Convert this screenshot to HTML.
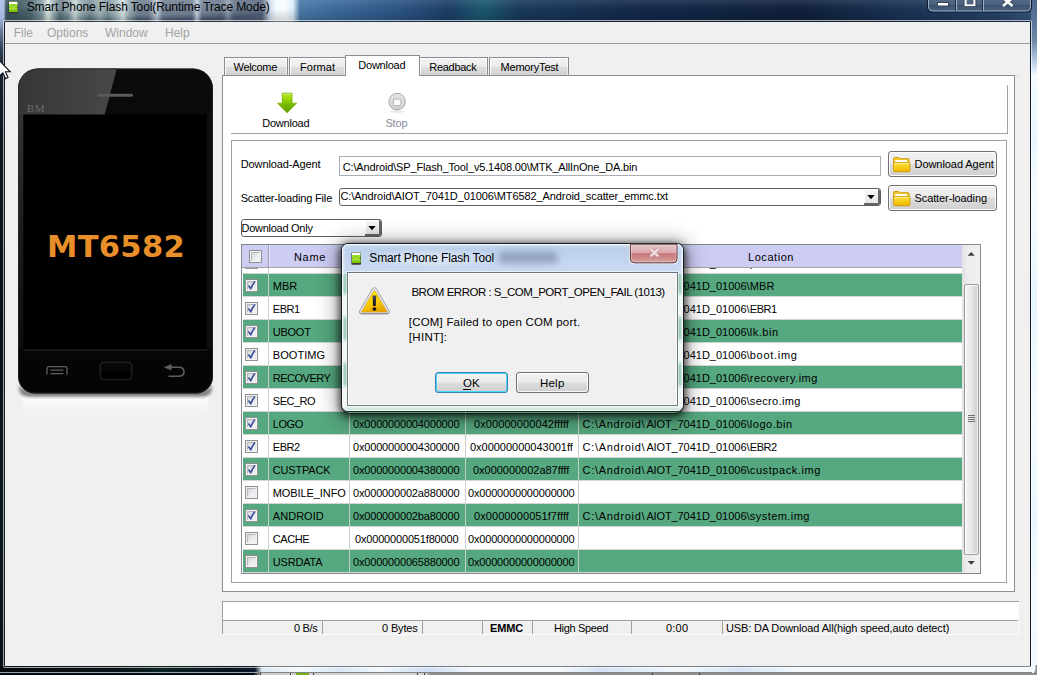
<!DOCTYPE html><html><head><meta charset="utf-8"><title>Smart Phone Flash Tool</title><style>
html,body{margin:0;padding:0}body{width:1037px;height:675px;overflow:hidden;position:relative;background:#0b1420;font-family:"Liberation Sans",sans-serif}div,span,svg{box-sizing:border-box}
</style></head><body>
<div style="position:absolute;left:0px;top:0px;width:1037px;height:22px;background:linear-gradient(to right,#b4c4ea 0px,#a3b3d4 4px,#3e5661 6px,#3d555f 12px,#4a646e 30px,#7f979e 42px,#dcebe4 48px,#9ab0b4 53px,#4f6872 60px,#6f8890 68px,#c4d6d6 75px,#8099a0 81px,#566f78 90px,#8aa0a6 100px,#5d7680 108px,#8fa6ac 116px,#d0dfe0 123px,#7a929c 129px,#3f5268 138px,#45566f 148px,#aebccc 157px,#4c5c76 163px,#46566f 170px,#475771 192px,#b9c8d8 197px,#4b5b75 202px,#48586f 222px,#7b8ba2 228px,#4a5a73 234px,#52627b 262px,#cfdceb 270px,#f4faff 276px,#f8fcff 285px,#dcecf8 293px,#4a78a8 300px,#3b6898 340px,#2c5484 400px,#1d3f66 450px,#1b5870 483px,#1a3a5c 520px,#14294a 640px,#10203c 800px,#1a3354 900px,#27456b 1000px,#3a5a80 1037px)"></div>
<div style="position:absolute;left:0px;top:0px;width:1037px;height:22px;background:linear-gradient(to bottom,rgba(255,255,255,.10),rgba(255,255,255,0) 40%,rgba(0,0,0,.18))"></div>
<div style="position:absolute;left:0px;top:0px;width:4px;height:675px;background:linear-gradient(to bottom,#b4c4ea 0,#a5b5dc 18px,#6f80a0 30px,#33435a 48px,#16222e 70px,#0d161f 140px,#0a1018 320px,#0c1a1e 520px,#091016 100%)"></div>
<div style="position:absolute;left:1031px;top:0px;width:6px;height:675px;background:linear-gradient(to bottom,#4e6788 0,#5a7396 20px,#6d86a6 40px,#b9cfe6 62px,#f2fbff 75px,#e6f6fe 140px,#f6fcff 200px,#e4f5fd 300px,#f5fcff 420px,#e6f6fe 520px,#f4fbff 600px,#eef8fd 100%)"></div>
<div style="position:absolute;left:0px;top:666px;width:1037px;height:9px;background:linear-gradient(to right,#070b10 0,#0a1418 120px,#0c2224 160px,#08121a 230px,#0b1a2c 255px,#dfeaf2 262px,#f3f9fd 300px,#d8e6f6 340px,#f2f8fd 380px,#cfdff5 430px,#f1f7fc 470px,#f3f9fd 560px,#d4e3f5 600px,#f2f8fc 680px,#d6e5f6 740px,#f3f9fd 800px,#f4fafd 1037px)"></div>
<div style="position:absolute;left:0px;top:672px;width:262px;height:1px;background:#9aa4ac"></div>
<div style="position:absolute;left:0px;top:673px;width:1034px;height:2px;background:linear-gradient(to right,#05080c 0,#05080c 254px,#cfcfcf 262px,#d2d2d2 426px,#8e8e8e 430px,#8e8e8e 1034px)"></div>
<div style="position:absolute;left:258px;top:672px;width:774px;height:1px;background:#7f8388"></div>
<div style="position:absolute;left:255px;top:673px;width:1px;height:2px;background:#3a3a3a"></div>
<div style="position:absolute;left:260px;top:673px;width:1px;height:2px;background:#3a3a3a"></div>
<div style="position:absolute;left:290px;top:673px;width:1px;height:2px;background:#3a3a3a"></div>
<div style="position:absolute;left:313px;top:673px;width:1px;height:2px;background:#3a3a3a"></div>
<div style="position:absolute;left:417px;top:673px;width:1px;height:2px;background:#3a3a3a"></div>
<div style="position:absolute;left:424px;top:673px;width:1px;height:2px;background:#3a3a3a"></div>
<div style="position:absolute;left:652px;top:673px;width:1px;height:2px;background:#3a3a3a"></div>
<div style="position:absolute;left:699px;top:673px;width:1px;height:2px;background:#3a3a3a"></div>
<div style="position:absolute;left:296px;top:673px;width:13px;height:2px;background:#76ad10"></div>
<div style="position:absolute;left:3px;top:20px;width:1029px;height:648px;border:1px solid rgba(255,255,255,.62);border-radius:2px"></div>
<div style="position:absolute;left:4px;top:21px;width:1027px;height:646px;border:1px solid rgba(22,32,42,.55);border-radius:1px"></div>
<div style="position:absolute;left:5px;top:22px;width:1025px;height:644px;background:#f0f0f0"></div>
<svg style="position:absolute;left:1027px;top:665px" width="10" height="10"><path d="M10 0 L10 10 L0 10 L0 8.5 L4 8.5 Q8.5 8.5 8.5 3 L8.5 0 Z" fill="#8e8e8e"/></svg>
<svg style="position:absolute;left:8px;top:0.5px" width="10.4" height="13.4" viewBox="0 0 10.4 13.4"><rect x="0.4" y="0.6" width="9.6" height="12.2" rx="0.8" fill="#3b3b3b"/><rect x="1" y="0.8" width="8.4" height="10" fill="#82d000"/><rect x="1" y="0.8" width="8.4" height="2.4" fill="#fbfff2"/><path d="M1 2.6 L5.2 6 L9.4 2.6 V4.6 L5.2 7.2 L1 4.6 Z" fill="#a7e24a"/><rect x="1" y="7.6" width="8.4" height="0.9" fill="#d9f5a8"/><rect x="1" y="8.5" width="8.4" height="2.3" fill="#7ccb00"/></svg>
<div style="position:absolute;left:14px;top:-8px;width:268px;height:28px;background:radial-gradient(ellipse at center,rgba(225,232,236,.34) 0,rgba(225,232,236,.28) 45%,rgba(225,232,236,0) 72%)"></div>
<span style="position:absolute;top:1.00px;font:400 12px/1 'Liberation Sans',sans-serif;color:#000;white-space:pre;letter-spacing:-0.100px;left:26.70px;">Smart Phone Flash Tool(Runtime Trace Mode)</span>
<svg style="position:absolute;left:927px;top:0px" width="106" height="13" viewBox="0 0 106 13"><defs><linearGradient id="cb" x1="0" y1="0" x2="0" y2="1"><stop offset="0" stop-color="#566b86"/><stop offset="0.45" stop-color="#4b617d"/><stop offset="0.5" stop-color="#3c5370"/><stop offset="1" stop-color="#4a627f"/></linearGradient></defs><path d="M0.5 -1 L0.5 7 Q0.5 12 5.5 12 L99.5 12 Q104.5 12 104.5 7 L104.5 -1 Z" fill="#1b2c44" stroke="#0f1b2d"/><path d="M1.5 -1 L1.5 7 Q1.5 11 5.5 11 L99.5 11 Q103.5 11 103.5 7 L103.5 -1 Z" fill="url(#cb)" stroke="#9db0c6" stroke-width="1"/><path d="M29.5 0 V11 M56.5 0 V11" stroke="#9db0c6"/><path d="M28.5 0 V11 M55.5 0 V11" stroke="#1c2e47"/><rect x="10.5" y="2.5" width="11" height="3.5" fill="#fff" stroke="#3a4658" stroke-width="1"/><rect x="38.5" y="-3" width="9" height="8.5" fill="none" stroke="#fff" stroke-width="2.2"/><rect x="37" y="-4" width="12" height="10.6" fill="none" stroke="#3a4658" stroke-width=".8"/><path d="M76 -2 L85.5 6 M85.5 -2 L76 6" stroke="#3a4658" stroke-width="4.2"/><path d="M76 -2 L85.5 6 M85.5 -2 L76 6" stroke="#fff" stroke-width="2.6"/></svg>
<div style="position:absolute;left:5px;top:43px;width:1025px;height:1px;background:#979797"></div>
<span style="position:absolute;top:27.00px;font:400 12px/1 'Liberation Sans',sans-serif;color:#a3a3a3;white-space:pre;letter-spacing:0.000px;left:13.70px;">File</span>
<span style="position:absolute;top:27.00px;font:400 12px/1 'Liberation Sans',sans-serif;color:#a3a3a3;white-space:pre;letter-spacing:0.000px;left:47.00px;">Options</span>
<span style="position:absolute;top:27.00px;font:400 12px/1 'Liberation Sans',sans-serif;color:#a3a3a3;white-space:pre;letter-spacing:0.000px;left:105.00px;">Window</span>
<span style="position:absolute;top:27.00px;font:400 12px/1 'Liberation Sans',sans-serif;color:#a3a3a3;white-space:pre;letter-spacing:0.000px;left:165.00px;">Help</span>
<svg style="position:absolute;left:10px;top:60px" width="212" height="380" viewBox="10 60 212 380"><defs><linearGradient id="refl" x1="0" y1="0" x2="0" y2="1"><stop offset="0" stop-color="#ffffff" stop-opacity=".85"/><stop offset="1" stop-color="#f0f0f0" stop-opacity="0"/></linearGradient><linearGradient id="gloss" x1="0" y1="0" x2="1" y2="0"><stop offset="0" stop-color="#363636"/><stop offset="1" stop-color="#484848"/></linearGradient><linearGradient id="lside" gradientUnits="userSpaceOnUse" x1="0" y1="115" x2="0" y2="350"><stop offset="0" stop-color="#333"/><stop offset=".5" stop-color="#1c1c1c"/><stop offset="1" stop-color="#0c0c0c"/></linearGradient><linearGradient id="body" x1="0" y1="0" x2="0" y2="1"><stop offset="0" stop-color="#0b0b0b"/><stop offset="1" stop-color="#050505"/></linearGradient><filter id="ps" x="-10%" y="-10%" width="120%" height="120%"><feGaussianBlur stdDeviation="1.6"/></filter><clipPath id="pc"><path d="M38 68.5 H193 A20 20 0 0 1 213 88.5 V376.5 A17 17 0 0 1 196 393.5 H35 A17 17 0 0 1 18 376.5 V88.5 A20 20 0 0 1 38 68.5 Z"/></clipPath></defs><path d="M22 396 H209 Q209 410 203 428 H28 Q22 410 22 396 Z" fill="url(#refl)"/><path d="M30 390 H201 Q210 390 212 384 V388 Q212 397 200 397 H31 Q19 397 19 388 V384 Q21 390 30 390Z" fill="#000" opacity=".45" filter="url(#ps)"/><path d="M38 68.5 H193 A20 20 0 0 1 213 88.5 V376.5 A17 17 0 0 1 196 393.5 H35 A17 17 0 0 1 18 376.5 V88.5 A20 20 0 0 1 38 68.5 Z" fill="url(#body)"/><g clip-path="url(#pc)"><path d="M18 68 H117 L104.5 115 H18 Z" fill="url(#gloss)"/><path d="M18 115 H23.5 V350 H18 Z" fill="url(#lside)"/><rect x="206.5" y="115" width="6.5" height="235" fill="#0d0d0d"/></g><path d="M38 69 H193 A19.5 19.5 0 0 1 212.5 88.5 V376.5 A16.5 16.5 0 0 1 196 393 H35 A16.5 16.5 0 0 1 18.5 376.5 V88.5 A19.5 19.5 0 0 1 38 69 Z" fill="none" stroke="#2a2a2a" stroke-width="1" opacity=".7"/><rect x="23.5" y="114.5" width="183" height="235.5" fill="#000"/><rect x="23.5" y="349.5" width="183" height="1" fill="#2e2e2e"/><rect x="97.5" y="93.7" width="35.5" height="3" rx="1.5" fill="#5a5a5a"/><rect x="100.2" y="362.2" width="31.6" height="17.6" rx="4" fill="#060606" stroke="#2c2c2c" stroke-width="1"/><rect x="101" y="372" width="30" height="7" rx="3" fill="#000"/><path d="M47 374.5 V368.5 Q47 366.7 48.8 366.7 H65.2 Q67 366.7 67 368.5 V374.5" fill="none" stroke="#5e5e5e" stroke-width="1.3"/><path d="M50.5 370.2 H63.5 M50.5 373.6 H63.5" stroke="#5e5e5e" stroke-width="1.3"/><path d="M170 367.3 H178.5 Q184 367.3 184 371.7 Q184 376.2 178.5 376.2 H168.5" fill="none" stroke="#5e5e5e" stroke-width="1.6"/><path d="M163.7 367.3 L171.5 364 V370.6 Z" fill="#5e5e5e"/></svg>
<span style="position:absolute;top:103.00px;font:400 11px/1 'Liberation Serif',serif;color:#6b6b6b;white-space:pre;letter-spacing:0.438px;left:27.00px;">BM</span>
<span style="position:absolute;top:232.00px;font:700 30.5px/1 'DejaVu Sans',sans-serif;color:#e98f29;white-space:pre;letter-spacing:0.326px;left:47.00px;">MT6582</span>
<div style="position:absolute;left:224px;top:57px;width:64px;height:19px;background:linear-gradient(to bottom,#f3f3f3 0,#ececec 48%,#dedede 52%,#d0d0d0 100%);border:1px solid #898c95;border-bottom:none;box-shadow:inset 1px 1px 0 rgba(255,255,255,.85),inset -1px 0 0 rgba(255,255,255,.5)"></div>
<div style="position:absolute;left:289px;top:57px;width:57px;height:19px;background:linear-gradient(to bottom,#f3f3f3 0,#ececec 48%,#dedede 52%,#d0d0d0 100%);border:1px solid #898c95;border-bottom:none;box-shadow:inset 1px 1px 0 rgba(255,255,255,.85),inset -1px 0 0 rgba(255,255,255,.5)"></div>
<div style="position:absolute;left:419px;top:57px;width:69px;height:19px;background:linear-gradient(to bottom,#f3f3f3 0,#ececec 48%,#dedede 52%,#d0d0d0 100%);border:1px solid #898c95;border-bottom:none;box-shadow:inset 1px 1px 0 rgba(255,255,255,.85),inset -1px 0 0 rgba(255,255,255,.5)"></div>
<div style="position:absolute;left:489px;top:57px;width:80px;height:19px;background:linear-gradient(to bottom,#f3f3f3 0,#ececec 48%,#dedede 52%,#d0d0d0 100%);border:1px solid #898c95;border-bottom:none;box-shadow:inset 1px 1px 0 rgba(255,255,255,.85),inset -1px 0 0 rgba(255,255,255,.5)"></div>
<div style="position:absolute;left:222px;top:75px;width:793px;height:517px;background:#fff;border:1px solid #898c95"></div>
<div style="position:absolute;left:1015px;top:75px;width:4px;height:1px;background:#d9d9d9"></div>
<div style="position:absolute;left:345px;top:55px;width:75px;height:21px;background:#fff;border:1px solid #898c95;border-bottom:none"></div>
<span style="position:absolute;top:62.00px;font:400 11px/1 'Liberation Sans',sans-serif;color:#000;white-space:pre;letter-spacing:-0.308px;left:233.50px;">Welcome</span>
<span style="position:absolute;top:62.00px;font:400 11px/1 'Liberation Sans',sans-serif;color:#000;white-space:pre;letter-spacing:0.026px;left:300.00px;">Format</span>
<span style="position:absolute;top:60.00px;font:400 11px/1 'Liberation Sans',sans-serif;color:#000;white-space:pre;letter-spacing:-0.240px;left:358.30px;">Download</span>
<span style="position:absolute;top:62.00px;font:400 11px/1 'Liberation Sans',sans-serif;color:#000;white-space:pre;letter-spacing:-0.293px;left:429.30px;">Readback</span>
<span style="position:absolute;top:62.00px;font:400 11px/1 'Liberation Sans',sans-serif;color:#000;white-space:pre;letter-spacing:-0.191px;left:500.50px;">MemoryTest</span>
<div style="position:absolute;left:231px;top:133px;width:777px;height:1px;background:#a0a0a0"></div>
<div style="position:absolute;left:1007px;top:85px;width:1px;height:49px;background:#a0a0a0"></div>
<svg style="position:absolute;left:275px;top:91px" width="24" height="24" viewBox="275 91 24 24"><defs><linearGradient id="ga" x1="0" y1="0" x2="0" y2="1"><stop offset="0" stop-color="#b4e62e"/><stop offset=".3" stop-color="#9ad806"/><stop offset=".6" stop-color="#78b800"/><stop offset="1" stop-color="#5f9c00"/></linearGradient></defs><path d="M282.3 93.2 H292 V103.2 H296.6 L287.1 112.8 L277.5 103.2 H282.3 Z" fill="url(#ga)" stroke="#72ae00" stroke-width=".8" stroke-linejoin="round"/><path d="M283.2 94.2 H291.1" stroke="#d2f28a" stroke-width=".8"/></svg>
<span style="position:absolute;top:118.00px;font:400 11px/1 'Liberation Sans',sans-serif;color:#000;white-space:pre;letter-spacing:-0.215px;left:262.20px;">Download</span>
<svg style="position:absolute;left:386px;top:91px" width="22" height="24" viewBox="386 91 22 24"><defs><linearGradient id="gs" x1="0" y1="0" x2="0" y2="1"><stop offset="0" stop-color="#e6e6e6"/><stop offset="1" stop-color="#d0d0d0"/></linearGradient></defs><ellipse cx="397" cy="111.6" rx="8" ry="1.1" fill="#e9e9e9"/><circle cx="397.1" cy="101.6" r="8.3" fill="url(#gs)" stroke="#a9a9a9" stroke-width="1"/><rect x="393.4" y="99.2" width="7.5" height="6.4" rx="0.8" fill="#fbfbfb" stroke="#b5b5b5" stroke-width="1"/></svg>
<span style="position:absolute;top:118.00px;font:400 11px/1 'Liberation Sans',sans-serif;color:#8a8a99;white-space:pre;letter-spacing:-0.110px;left:385.40px;">Stop</span>
<div style="position:absolute;left:231px;top:140px;width:776px;height:443px;border:1px solid #a0a0a0;background:#fff"></div>
<span style="position:absolute;top:159.00px;font:400 11px/1 'Liberation Sans',sans-serif;color:#000;white-space:pre;letter-spacing:-0.103px;left:240.70px;">Download-Agent</span>
<div style="position:absolute;left:339px;top:156px;width:542px;height:20px;border:1px solid #abadb3;background:#fff"></div>
<span style="position:absolute;top:162.00px;font:400 11px/1 'Liberation Sans',sans-serif;color:#000;white-space:pre;letter-spacing:-0.160px;left:342.80px;">C:\Android\SP_Flash_Tool_v5.1408.00\MTK_AllInOne_DA.bin</span>
<span style="position:absolute;top:193.00px;font:400 11px/1 'Liberation Sans',sans-serif;color:#000;white-space:pre;letter-spacing:-0.169px;left:240.70px;">Scatter-loading File</span>
<div style="position:absolute;left:339px;top:188px;width:542px;height:18px;background:#fff;border:1px solid #5e5e5e;border-radius:3px"></div><div style="position:absolute;left:864px;top:189px;width:16px;height:16px;background:#666;border-radius:0 2px 2px 0"></div><div style="position:absolute;left:864px;top:189px;width:14px;height:14px;background:linear-gradient(#f6f6f6,#e6e6e6);border-top:1px solid #fff;border-left:1px solid #fff"></div><svg style="position:absolute;left:867px;top:195px" width="9" height="5"><path d="M0.3 0 H7.7 L4 4.3 Z" fill="#000"/></svg>
<span style="position:absolute;top:191.00px;font:400 11px/1 'Liberation Sans',sans-serif;color:#000;white-space:pre;letter-spacing:-0.097px;left:340.50px;">C:\Android\AIOT_7041D_01006\MT6582_Android_scatter_emmc.txt</span>
<div style="position:absolute;left:241px;top:219px;width:141px;height:18px;background:#fff;border:1px solid #5e5e5e;border-radius:3px"></div><div style="position:absolute;left:365px;top:220px;width:16px;height:16px;background:#666;border-radius:0 2px 2px 0"></div><div style="position:absolute;left:365px;top:220px;width:14px;height:14px;background:linear-gradient(#f6f6f6,#e6e6e6);border-top:1px solid #fff;border-left:1px solid #fff"></div><svg style="position:absolute;left:368px;top:226px" width="9" height="5"><path d="M0.3 0 H7.7 L4 4.3 Z" fill="#000"/></svg>
<span style="position:absolute;top:223.00px;font:400 11px/1 'Liberation Sans',sans-serif;color:#000;white-space:pre;letter-spacing:-0.276px;left:241.60px;">Download Only</span>
<div style="position:absolute;left:888px;top:151px;width:109px;height:26px;border:1px solid #707070;border-radius:3px;background:linear-gradient(to bottom,#f2f2f2 0,#ebebeb 46%,#dddddd 50%,#cfcfcf 100%);box-shadow:inset 0 0 0 1px rgba(255,255,255,.9)"></div><svg style="position:absolute;left:892px;top:156px" width="19" height="17" viewBox="0 0 19 17"><defs><linearGradient id="fy1" x1="0" y1="0" x2="0" y2="1"><stop offset="0" stop-color="#fde648"/><stop offset=".45" stop-color="#f8cf1c"/><stop offset="1" stop-color="#f0b400"/></linearGradient></defs><path d="M1.6 2.3 Q1.6 1.5 2.4 1.5 H6.9 L7.9 2.7 H16.2 Q17 2.7 17 3.5 V8 H1.6 Z" fill="#f4c62c" stroke="#cb9b02" stroke-width=".9"/><rect x="3.1" y="4.1" width="11.9" height="2" fill="#ffffff"/><path d="M1.6 6.7 H17.4 Q17.9 6.7 17.9 7.2 V14.8 Q17.9 15.7 17 15.7 H2.5 Q1.6 15.7 1.6 14.8 Z" fill="url(#fy1)" stroke="#cb9b02" stroke-width=".9"/><path d="M2.3 7.5 H17.2" stroke="#fff3a8" stroke-width=".8"/></svg><span style="position:absolute;top:159.00px;font:400 11px/1 'Liberation Sans',sans-serif;color:#000;white-space:pre;letter-spacing:-0.059px;left:914.50px;">Download Agent</span>
<div style="position:absolute;left:888px;top:185px;width:109px;height:26px;border:1px solid #707070;border-radius:3px;background:linear-gradient(to bottom,#f2f2f2 0,#ebebeb 46%,#dddddd 50%,#cfcfcf 100%);box-shadow:inset 0 0 0 1px rgba(255,255,255,.9)"></div><svg style="position:absolute;left:892px;top:190px" width="19" height="17" viewBox="0 0 19 17"><defs><linearGradient id="fy2" x1="0" y1="0" x2="0" y2="1"><stop offset="0" stop-color="#fde648"/><stop offset=".45" stop-color="#f8cf1c"/><stop offset="1" stop-color="#f0b400"/></linearGradient></defs><path d="M1.6 2.3 Q1.6 1.5 2.4 1.5 H6.9 L7.9 2.7 H16.2 Q17 2.7 17 3.5 V8 H1.6 Z" fill="#f4c62c" stroke="#cb9b02" stroke-width=".9"/><rect x="3.1" y="4.1" width="11.9" height="2" fill="#ffffff"/><path d="M1.6 6.7 H17.4 Q17.9 6.7 17.9 7.2 V14.8 Q17.9 15.7 17 15.7 H2.5 Q1.6 15.7 1.6 14.8 Z" fill="url(#fy2)" stroke="#cb9b02" stroke-width=".9"/><path d="M2.3 7.5 H17.2" stroke="#fff3a8" stroke-width=".8"/></svg><span style="position:absolute;top:193.00px;font:400 11px/1 'Liberation Sans',sans-serif;color:#000;white-space:pre;letter-spacing:-0.100px;left:914.50px;">Scatter-loading</span>
<div style="position:absolute;left:241px;top:244px;width:740px;height:330px;border:1px solid #828790;background:#fff"></div>
<div style="position:absolute;left:245px;top:262px;width:13px;height:7px;border:1px solid #9a9a9a;border-top:none;background:#f4f4f4"></div>
<div style="position:absolute;left:242px;top:245px;width:720px;height:22px;background:#cdcdf4"></div>
<div style="position:absolute;left:242px;top:267px;width:720px;height:1px;background:#a3a3a3"></div>
<div style="position:absolute;left:242px;top:273px;width:720px;height:1px;background:#d4d4d4"></div>
<div style="position:absolute;left:268px;top:245px;width:1px;height:22px;background:#9d9db2"></div>
<div style="position:absolute;left:269px;top:245px;width:1px;height:22px;background:#e4e4fb"></div>
<div style="position:absolute;left:268px;top:268px;width:1px;height:5px;background:#cfcfcf"></div>
<div style="position:absolute;left:349px;top:245px;width:1px;height:22px;background:#9d9db2"></div>
<div style="position:absolute;left:350px;top:245px;width:1px;height:22px;background:#e4e4fb"></div>
<div style="position:absolute;left:349px;top:268px;width:1px;height:5px;background:#cfcfcf"></div>
<div style="position:absolute;left:465px;top:245px;width:1px;height:22px;background:#9d9db2"></div>
<div style="position:absolute;left:466px;top:245px;width:1px;height:22px;background:#e4e4fb"></div>
<div style="position:absolute;left:465px;top:268px;width:1px;height:5px;background:#cfcfcf"></div>
<div style="position:absolute;left:578px;top:245px;width:1px;height:22px;background:#9d9db2"></div>
<div style="position:absolute;left:579px;top:245px;width:1px;height:22px;background:#e4e4fb"></div>
<div style="position:absolute;left:578px;top:268px;width:1px;height:5px;background:#cfcfcf"></div>
<div style="position:absolute;left:243px;top:268px;width:719px;height:5px;overflow:hidden"><span style="position:absolute;top:-10.00px;font:400 11px/1 'Liberation Sans',sans-serif;color:#000;white-space:pre;letter-spacing:0.700px;left:339.60px;">C:\Android\</span><span style="position:absolute;top:-10.00px;font:400 11px/1 'Liberation Sans',sans-serif;color:#000;white-space:pre;letter-spacing:-0.118px;left:403.40px;">AIOT_7</span><span style="position:absolute;top:-10.00px;font:400 11px/1 'Liberation Sans',sans-serif;color:#000;white-space:pre;letter-spacing:-0.006px;left:440.60px;">041D_01006\</span><span style="position:absolute;top:-10.00px;font:400 11px/1 'Liberation Sans',sans-serif;color:#000;white-space:pre;letter-spacing:0.484px;left:506.80px;">preloader.bin</span></div>
<div style="position:absolute;left:249px;top:250px;width:13px;height:13px;border:1px solid #8e8f8f;background:#f4f4f4"></div><div style="position:absolute;left:251px;top:252px;width:9px;height:9px;border:1px solid;border-color:#b2b4b8 #e6e8ea #e9ebed #b5b7bb;background:linear-gradient(135deg,#d2d5d9 0,#e6e8ea 45%,#f8f9f9 100%)"></div>
<span style="position:absolute;top:252.00px;font:400 11px/1 'Liberation Sans',sans-serif;color:#000;white-space:pre;letter-spacing:0.664px;left:294px;">Name</span>
<span style="position:absolute;top:252.00px;font:400 11px/1 'Liberation Sans',sans-serif;color:#000;white-space:pre;letter-spacing:0.000px;left:372px;">Begin Address</span>
<span style="position:absolute;top:252.00px;font:400 11px/1 'Liberation Sans',sans-serif;color:#000;white-space:pre;letter-spacing:0.000px;left:491px;">End Address</span>
<span style="position:absolute;top:252.00px;font:400 11px/1 'Liberation Sans',sans-serif;color:#000;white-space:pre;letter-spacing:0.551px;left:748px;">Location</span>
<div style="position:absolute;left:243px;top:274px;width:719px;height:22px;background:#55a87f"></div>
<div style="position:absolute;left:243px;top:296px;width:719px;height:1px;background:#cfd8d3"></div>
<div style="position:absolute;left:268px;top:274px;width:1px;height:22px;background:#c4cfc9"></div>
<div style="position:absolute;left:349px;top:274px;width:1px;height:22px;background:#c4cfc9"></div>
<div style="position:absolute;left:465px;top:274px;width:1px;height:22px;background:#c4cfc9"></div>
<div style="position:absolute;left:578px;top:274px;width:1px;height:22px;background:#c4cfc9"></div>
<div style="position:absolute;left:245px;top:279px;width:13px;height:13px;border:1px solid #8e8f8f;background:#f4f4f4"></div><div style="position:absolute;left:247px;top:281px;width:9px;height:9px;border:1px solid;border-color:#b2b4b8 #e6e8ea #e9ebed #b5b7bb;background:linear-gradient(135deg,#d2d5d9 0,#e6e8ea 45%,#f8f9f9 100%)"></div><svg style="position:absolute;left:247px;top:281px" width="10" height="10"><path d="M1.8 5.1 L3.8 7.8 Q5.3 3.8 7.5 1" fill="none" stroke="#3a4e9c" stroke-width="1.65" stroke-linecap="round" stroke-linejoin="round"/></svg>
<span style="position:absolute;top:281.00px;font:400 11px/1 'Liberation Sans',sans-serif;color:#000;white-space:pre;letter-spacing:-0.018px;left:272.80px;">MBR</span>
<span style="position:absolute;top:281.00px;font:400 11px/1 'Liberation Sans',sans-serif;color:#000;white-space:pre;letter-spacing:-0.170px;left:353px;">0x0000000001400000</span>
<span style="position:absolute;top:281.00px;font:400 11px/1 'Liberation Sans',sans-serif;color:#000;white-space:pre;letter-spacing:-0.170px;left:474px;">0x000000000147ffff</span>
<span style="position:absolute;top:281.00px;font:400 11px/1 'Liberation Sans',sans-serif;color:#000;white-space:pre;letter-spacing:0.700px;left:582.60px;">C:\Android\</span><span style="position:absolute;top:281.00px;font:400 11px/1 'Liberation Sans',sans-serif;color:#000;white-space:pre;letter-spacing:-0.118px;left:646.40px;">AIOT_7</span><span style="position:absolute;top:281.00px;font:400 11px/1 'Liberation Sans',sans-serif;color:#000;white-space:pre;letter-spacing:-0.006px;left:683.60px;">041D_01006\</span><span style="position:absolute;top:281.00px;font:400 11px/1 'Liberation Sans',sans-serif;color:#000;white-space:pre;letter-spacing:0.116px;left:749.80px;">MBR</span>
<div style="position:absolute;left:243px;top:319px;width:719px;height:1px;background:#d4d4d4"></div>
<div style="position:absolute;left:268px;top:297px;width:1px;height:22px;background:#cdcdcd"></div>
<div style="position:absolute;left:349px;top:297px;width:1px;height:22px;background:#cdcdcd"></div>
<div style="position:absolute;left:465px;top:297px;width:1px;height:22px;background:#cdcdcd"></div>
<div style="position:absolute;left:578px;top:297px;width:1px;height:22px;background:#cdcdcd"></div>
<div style="position:absolute;left:245px;top:302px;width:13px;height:13px;border:1px solid #8e8f8f;background:#f4f4f4"></div><div style="position:absolute;left:247px;top:304px;width:9px;height:9px;border:1px solid;border-color:#b2b4b8 #e6e8ea #e9ebed #b5b7bb;background:linear-gradient(135deg,#d2d5d9 0,#e6e8ea 45%,#f8f9f9 100%)"></div><svg style="position:absolute;left:247px;top:304px" width="10" height="10"><path d="M1.8 5.1 L3.8 7.8 Q5.3 3.8 7.5 1" fill="none" stroke="#3a4e9c" stroke-width="1.65" stroke-linecap="round" stroke-linejoin="round"/></svg>
<span style="position:absolute;top:304.00px;font:400 11px/1 'Liberation Sans',sans-serif;color:#000;white-space:pre;letter-spacing:-0.500px;left:272.80px;">EBR1</span>
<span style="position:absolute;top:304.00px;font:400 11px/1 'Liberation Sans',sans-serif;color:#000;white-space:pre;letter-spacing:-0.170px;left:353px;">0x0000000001480000</span>
<span style="position:absolute;top:304.00px;font:400 11px/1 'Liberation Sans',sans-serif;color:#000;white-space:pre;letter-spacing:-0.170px;left:471px;">0x00000000014801ff</span>
<span style="position:absolute;top:304.00px;font:400 11px/1 'Liberation Sans',sans-serif;color:#000;white-space:pre;letter-spacing:0.700px;left:582.60px;">C:\Android\</span><span style="position:absolute;top:304.00px;font:400 11px/1 'Liberation Sans',sans-serif;color:#000;white-space:pre;letter-spacing:-0.118px;left:646.40px;">AIOT_7</span><span style="position:absolute;top:304.00px;font:400 11px/1 'Liberation Sans',sans-serif;color:#000;white-space:pre;letter-spacing:-0.006px;left:683.60px;">041D_01006\</span><span style="position:absolute;top:304.00px;font:400 11px/1 'Liberation Sans',sans-serif;color:#000;white-space:pre;letter-spacing:-0.500px;left:749.80px;">EBR1</span>
<div style="position:absolute;left:243px;top:320px;width:719px;height:22px;background:#55a87f"></div>
<div style="position:absolute;left:243px;top:342px;width:719px;height:1px;background:#cfd8d3"></div>
<div style="position:absolute;left:268px;top:320px;width:1px;height:22px;background:#c4cfc9"></div>
<div style="position:absolute;left:349px;top:320px;width:1px;height:22px;background:#c4cfc9"></div>
<div style="position:absolute;left:465px;top:320px;width:1px;height:22px;background:#c4cfc9"></div>
<div style="position:absolute;left:578px;top:320px;width:1px;height:22px;background:#c4cfc9"></div>
<div style="position:absolute;left:245px;top:325px;width:13px;height:13px;border:1px solid #8e8f8f;background:#f4f4f4"></div><div style="position:absolute;left:247px;top:327px;width:9px;height:9px;border:1px solid;border-color:#b2b4b8 #e6e8ea #e9ebed #b5b7bb;background:linear-gradient(135deg,#d2d5d9 0,#e6e8ea 45%,#f8f9f9 100%)"></div><svg style="position:absolute;left:247px;top:327px" width="10" height="10"><path d="M1.8 5.1 L3.8 7.8 Q5.3 3.8 7.5 1" fill="none" stroke="#3a4e9c" stroke-width="1.65" stroke-linecap="round" stroke-linejoin="round"/></svg>
<span style="position:absolute;top:327.00px;font:400 11px/1 'Liberation Sans',sans-serif;color:#000;white-space:pre;letter-spacing:-0.265px;left:272.80px;">UBOOT</span>
<span style="position:absolute;top:327.00px;font:400 11px/1 'Liberation Sans',sans-serif;color:#000;white-space:pre;letter-spacing:-0.170px;left:353px;">0x0000000003d00000</span>
<span style="position:absolute;top:327.00px;font:400 11px/1 'Liberation Sans',sans-serif;color:#000;white-space:pre;letter-spacing:-0.170px;left:474px;">0x0000000003d5ffff</span>
<span style="position:absolute;top:327.00px;font:400 11px/1 'Liberation Sans',sans-serif;color:#000;white-space:pre;letter-spacing:0.700px;left:582.60px;">C:\Android\</span><span style="position:absolute;top:327.00px;font:400 11px/1 'Liberation Sans',sans-serif;color:#000;white-space:pre;letter-spacing:-0.118px;left:646.40px;">AIOT_7</span><span style="position:absolute;top:327.00px;font:400 11px/1 'Liberation Sans',sans-serif;color:#000;white-space:pre;letter-spacing:-0.006px;left:683.60px;">041D_01006\</span><span style="position:absolute;top:327.00px;font:400 11px/1 'Liberation Sans',sans-serif;color:#000;white-space:pre;letter-spacing:0.519px;left:749.80px;">lk.bin</span>
<div style="position:absolute;left:243px;top:365px;width:719px;height:1px;background:#d4d4d4"></div>
<div style="position:absolute;left:268px;top:343px;width:1px;height:22px;background:#cdcdcd"></div>
<div style="position:absolute;left:349px;top:343px;width:1px;height:22px;background:#cdcdcd"></div>
<div style="position:absolute;left:465px;top:343px;width:1px;height:22px;background:#cdcdcd"></div>
<div style="position:absolute;left:578px;top:343px;width:1px;height:22px;background:#cdcdcd"></div>
<div style="position:absolute;left:245px;top:348px;width:13px;height:13px;border:1px solid #8e8f8f;background:#f4f4f4"></div><div style="position:absolute;left:247px;top:350px;width:9px;height:9px;border:1px solid;border-color:#b2b4b8 #e6e8ea #e9ebed #b5b7bb;background:linear-gradient(135deg,#d2d5d9 0,#e6e8ea 45%,#f8f9f9 100%)"></div><svg style="position:absolute;left:247px;top:350px" width="10" height="10"><path d="M1.8 5.1 L3.8 7.8 Q5.3 3.8 7.5 1" fill="none" stroke="#3a4e9c" stroke-width="1.65" stroke-linecap="round" stroke-linejoin="round"/></svg>
<span style="position:absolute;top:350.00px;font:400 11px/1 'Liberation Sans',sans-serif;color:#000;white-space:pre;letter-spacing:0.050px;left:272.80px;">BOOTIMG</span>
<span style="position:absolute;top:350.00px;font:400 11px/1 'Liberation Sans',sans-serif;color:#000;white-space:pre;letter-spacing:-0.170px;left:353px;">0x0000000003d60000</span>
<span style="position:absolute;top:350.00px;font:400 11px/1 'Liberation Sans',sans-serif;color:#000;white-space:pre;letter-spacing:-0.170px;left:473px;">0x0000000004353fff</span>
<span style="position:absolute;top:350.00px;font:400 11px/1 'Liberation Sans',sans-serif;color:#000;white-space:pre;letter-spacing:0.700px;left:582.60px;">C:\Android\</span><span style="position:absolute;top:350.00px;font:400 11px/1 'Liberation Sans',sans-serif;color:#000;white-space:pre;letter-spacing:-0.118px;left:646.40px;">AIOT_7</span><span style="position:absolute;top:350.00px;font:400 11px/1 'Liberation Sans',sans-serif;color:#000;white-space:pre;letter-spacing:-0.006px;left:683.60px;">041D_01006\</span><span style="position:absolute;top:350.00px;font:400 11px/1 'Liberation Sans',sans-serif;color:#000;white-space:pre;letter-spacing:0.700px;left:749.80px;">boot.img</span>
<div style="position:absolute;left:243px;top:366px;width:719px;height:22px;background:#55a87f"></div>
<div style="position:absolute;left:243px;top:388px;width:719px;height:1px;background:#cfd8d3"></div>
<div style="position:absolute;left:268px;top:366px;width:1px;height:22px;background:#c4cfc9"></div>
<div style="position:absolute;left:349px;top:366px;width:1px;height:22px;background:#c4cfc9"></div>
<div style="position:absolute;left:465px;top:366px;width:1px;height:22px;background:#c4cfc9"></div>
<div style="position:absolute;left:578px;top:366px;width:1px;height:22px;background:#c4cfc9"></div>
<div style="position:absolute;left:245px;top:371px;width:13px;height:13px;border:1px solid #8e8f8f;background:#f4f4f4"></div><div style="position:absolute;left:247px;top:373px;width:9px;height:9px;border:1px solid;border-color:#b2b4b8 #e6e8ea #e9ebed #b5b7bb;background:linear-gradient(135deg,#d2d5d9 0,#e6e8ea 45%,#f8f9f9 100%)"></div><svg style="position:absolute;left:247px;top:373px" width="10" height="10"><path d="M1.8 5.1 L3.8 7.8 Q5.3 3.8 7.5 1" fill="none" stroke="#3a4e9c" stroke-width="1.65" stroke-linecap="round" stroke-linejoin="round"/></svg>
<span style="position:absolute;top:373.00px;font:400 11px/1 'Liberation Sans',sans-serif;color:#000;white-space:pre;letter-spacing:-0.500px;left:272.80px;">RECOVERY</span>
<span style="position:absolute;top:373.00px;font:400 11px/1 'Liberation Sans',sans-serif;color:#000;white-space:pre;letter-spacing:-0.170px;left:353px;">0x0000000004360000</span>
<span style="position:absolute;top:373.00px;font:400 11px/1 'Liberation Sans',sans-serif;color:#000;white-space:pre;letter-spacing:-0.170px;left:474px;">0x0000000004a0ffff</span>
<span style="position:absolute;top:373.00px;font:400 11px/1 'Liberation Sans',sans-serif;color:#000;white-space:pre;letter-spacing:0.700px;left:582.60px;">C:\Android\</span><span style="position:absolute;top:373.00px;font:400 11px/1 'Liberation Sans',sans-serif;color:#000;white-space:pre;letter-spacing:-0.118px;left:646.40px;">AIOT_7</span><span style="position:absolute;top:373.00px;font:400 11px/1 'Liberation Sans',sans-serif;color:#000;white-space:pre;letter-spacing:-0.006px;left:683.60px;">041D_01006\</span><span style="position:absolute;top:373.00px;font:400 11px/1 'Liberation Sans',sans-serif;color:#000;white-space:pre;letter-spacing:0.495px;left:749.80px;">recovery.img</span>
<div style="position:absolute;left:243px;top:411px;width:719px;height:1px;background:#d4d4d4"></div>
<div style="position:absolute;left:268px;top:389px;width:1px;height:22px;background:#cdcdcd"></div>
<div style="position:absolute;left:349px;top:389px;width:1px;height:22px;background:#cdcdcd"></div>
<div style="position:absolute;left:465px;top:389px;width:1px;height:22px;background:#cdcdcd"></div>
<div style="position:absolute;left:578px;top:389px;width:1px;height:22px;background:#cdcdcd"></div>
<div style="position:absolute;left:245px;top:394px;width:13px;height:13px;border:1px solid #8e8f8f;background:#f4f4f4"></div><div style="position:absolute;left:247px;top:396px;width:9px;height:9px;border:1px solid;border-color:#b2b4b8 #e6e8ea #e9ebed #b5b7bb;background:linear-gradient(135deg,#d2d5d9 0,#e6e8ea 45%,#f8f9f9 100%)"></div><svg style="position:absolute;left:247px;top:396px" width="10" height="10"><path d="M1.8 5.1 L3.8 7.8 Q5.3 3.8 7.5 1" fill="none" stroke="#3a4e9c" stroke-width="1.65" stroke-linecap="round" stroke-linejoin="round"/></svg>
<span style="position:absolute;top:396.00px;font:400 11px/1 'Liberation Sans',sans-serif;color:#000;white-space:pre;letter-spacing:-0.500px;left:272.80px;">SEC_RO</span>
<span style="position:absolute;top:396.00px;font:400 11px/1 'Liberation Sans',sans-serif;color:#000;white-space:pre;letter-spacing:-0.170px;left:353px;">0x0000000004960000</span>
<span style="position:absolute;top:396.00px;font:400 11px/1 'Liberation Sans',sans-serif;color:#000;white-space:pre;letter-spacing:-0.170px;left:473px;">0x0000000004981fff</span>
<span style="position:absolute;top:396.00px;font:400 11px/1 'Liberation Sans',sans-serif;color:#000;white-space:pre;letter-spacing:0.700px;left:582.60px;">C:\Android\</span><span style="position:absolute;top:396.00px;font:400 11px/1 'Liberation Sans',sans-serif;color:#000;white-space:pre;letter-spacing:-0.118px;left:646.40px;">AIOT_7</span><span style="position:absolute;top:396.00px;font:400 11px/1 'Liberation Sans',sans-serif;color:#000;white-space:pre;letter-spacing:-0.006px;left:683.60px;">041D_01006\</span><span style="position:absolute;top:396.00px;font:400 11px/1 'Liberation Sans',sans-serif;color:#000;white-space:pre;letter-spacing:0.368px;left:749.80px;">secro.img</span>
<div style="position:absolute;left:243px;top:412px;width:719px;height:22px;background:#55a87f"></div>
<div style="position:absolute;left:243px;top:434px;width:719px;height:1px;background:#cfd8d3"></div>
<div style="position:absolute;left:268px;top:412px;width:1px;height:22px;background:#c4cfc9"></div>
<div style="position:absolute;left:349px;top:412px;width:1px;height:22px;background:#c4cfc9"></div>
<div style="position:absolute;left:465px;top:412px;width:1px;height:22px;background:#c4cfc9"></div>
<div style="position:absolute;left:578px;top:412px;width:1px;height:22px;background:#c4cfc9"></div>
<div style="position:absolute;left:245px;top:417px;width:13px;height:13px;border:1px solid #8e8f8f;background:#f4f4f4"></div><div style="position:absolute;left:247px;top:419px;width:9px;height:9px;border:1px solid;border-color:#b2b4b8 #e6e8ea #e9ebed #b5b7bb;background:linear-gradient(135deg,#d2d5d9 0,#e6e8ea 45%,#f8f9f9 100%)"></div><svg style="position:absolute;left:247px;top:419px" width="10" height="10"><path d="M1.8 5.1 L3.8 7.8 Q5.3 3.8 7.5 1" fill="none" stroke="#3a4e9c" stroke-width="1.65" stroke-linecap="round" stroke-linejoin="round"/></svg>
<span style="position:absolute;top:419.00px;font:400 11px/1 'Liberation Sans',sans-serif;color:#000;white-space:pre;letter-spacing:-0.449px;left:272.80px;">LOGO</span>
<span style="position:absolute;top:419.00px;font:400 11px/1 'Liberation Sans',sans-serif;color:#000;white-space:pre;letter-spacing:-0.170px;left:353px;">0x0000000004000000</span>
<span style="position:absolute;top:419.00px;font:400 11px/1 'Liberation Sans',sans-serif;color:#000;white-space:pre;letter-spacing:0.089px;left:474px;">0x00000000042fffff</span>
<span style="position:absolute;top:419.00px;font:400 11px/1 'Liberation Sans',sans-serif;color:#000;white-space:pre;letter-spacing:0.700px;left:582.60px;">C:\Android\</span><span style="position:absolute;top:419.00px;font:400 11px/1 'Liberation Sans',sans-serif;color:#000;white-space:pre;letter-spacing:-0.118px;left:646.40px;">AIOT_7</span><span style="position:absolute;top:419.00px;font:400 11px/1 'Liberation Sans',sans-serif;color:#000;white-space:pre;letter-spacing:-0.006px;left:683.60px;">041D_01006\</span><span style="position:absolute;top:419.00px;font:400 11px/1 'Liberation Sans',sans-serif;color:#000;white-space:pre;letter-spacing:0.544px;left:749.80px;">logo.bin</span>
<div style="position:absolute;left:243px;top:457px;width:719px;height:1px;background:#d4d4d4"></div>
<div style="position:absolute;left:268px;top:435px;width:1px;height:22px;background:#cdcdcd"></div>
<div style="position:absolute;left:349px;top:435px;width:1px;height:22px;background:#cdcdcd"></div>
<div style="position:absolute;left:465px;top:435px;width:1px;height:22px;background:#cdcdcd"></div>
<div style="position:absolute;left:578px;top:435px;width:1px;height:22px;background:#cdcdcd"></div>
<div style="position:absolute;left:245px;top:440px;width:13px;height:13px;border:1px solid #8e8f8f;background:#f4f4f4"></div><div style="position:absolute;left:247px;top:442px;width:9px;height:9px;border:1px solid;border-color:#b2b4b8 #e6e8ea #e9ebed #b5b7bb;background:linear-gradient(135deg,#d2d5d9 0,#e6e8ea 45%,#f8f9f9 100%)"></div><svg style="position:absolute;left:247px;top:442px" width="10" height="10"><path d="M1.8 5.1 L3.8 7.8 Q5.3 3.8 7.5 1" fill="none" stroke="#3a4e9c" stroke-width="1.65" stroke-linecap="round" stroke-linejoin="round"/></svg>
<span style="position:absolute;top:442.00px;font:400 11px/1 'Liberation Sans',sans-serif;color:#000;white-space:pre;letter-spacing:-0.500px;left:272.80px;">EBR2</span>
<span style="position:absolute;top:442.00px;font:400 11px/1 'Liberation Sans',sans-serif;color:#000;white-space:pre;letter-spacing:-0.170px;left:353px;">0x0000000004300000</span>
<span style="position:absolute;top:442.00px;font:400 11px/1 'Liberation Sans',sans-serif;color:#000;white-space:pre;letter-spacing:-0.022px;left:470px;">0x00000000043001ff</span>
<span style="position:absolute;top:442.00px;font:400 11px/1 'Liberation Sans',sans-serif;color:#000;white-space:pre;letter-spacing:0.700px;left:582.60px;">C:\Android\</span><span style="position:absolute;top:442.00px;font:400 11px/1 'Liberation Sans',sans-serif;color:#000;white-space:pre;letter-spacing:-0.118px;left:646.40px;">AIOT_7</span><span style="position:absolute;top:442.00px;font:400 11px/1 'Liberation Sans',sans-serif;color:#000;white-space:pre;letter-spacing:-0.006px;left:683.60px;">041D_01006\</span><span style="position:absolute;top:442.00px;font:400 11px/1 'Liberation Sans',sans-serif;color:#000;white-space:pre;letter-spacing:-0.500px;left:749.80px;">EBR2</span>
<div style="position:absolute;left:243px;top:458px;width:719px;height:22px;background:#55a87f"></div>
<div style="position:absolute;left:243px;top:480px;width:719px;height:1px;background:#cfd8d3"></div>
<div style="position:absolute;left:268px;top:458px;width:1px;height:22px;background:#c4cfc9"></div>
<div style="position:absolute;left:349px;top:458px;width:1px;height:22px;background:#c4cfc9"></div>
<div style="position:absolute;left:465px;top:458px;width:1px;height:22px;background:#c4cfc9"></div>
<div style="position:absolute;left:578px;top:458px;width:1px;height:22px;background:#c4cfc9"></div>
<div style="position:absolute;left:245px;top:463px;width:13px;height:13px;border:1px solid #8e8f8f;background:#f4f4f4"></div><div style="position:absolute;left:247px;top:465px;width:9px;height:9px;border:1px solid;border-color:#b2b4b8 #e6e8ea #e9ebed #b5b7bb;background:linear-gradient(135deg,#d2d5d9 0,#e6e8ea 45%,#f8f9f9 100%)"></div><svg style="position:absolute;left:247px;top:465px" width="10" height="10"><path d="M1.8 5.1 L3.8 7.8 Q5.3 3.8 7.5 1" fill="none" stroke="#3a4e9c" stroke-width="1.65" stroke-linecap="round" stroke-linejoin="round"/></svg>
<span style="position:absolute;top:465.00px;font:400 11px/1 'Liberation Sans',sans-serif;color:#000;white-space:pre;letter-spacing:-0.199px;left:272.80px;">CUSTPACK</span>
<span style="position:absolute;top:465.00px;font:400 11px/1 'Liberation Sans',sans-serif;color:#000;white-space:pre;letter-spacing:-0.170px;left:353px;">0x0000000004380000</span>
<span style="position:absolute;top:465.00px;font:400 11px/1 'Liberation Sans',sans-serif;color:#000;white-space:pre;letter-spacing:-0.026px;left:473px;">0x000000002a87ffff</span>
<span style="position:absolute;top:465.00px;font:400 11px/1 'Liberation Sans',sans-serif;color:#000;white-space:pre;letter-spacing:0.700px;left:582.60px;">C:\Android\</span><span style="position:absolute;top:465.00px;font:400 11px/1 'Liberation Sans',sans-serif;color:#000;white-space:pre;letter-spacing:-0.118px;left:646.40px;">AIOT_7</span><span style="position:absolute;top:465.00px;font:400 11px/1 'Liberation Sans',sans-serif;color:#000;white-space:pre;letter-spacing:-0.006px;left:683.60px;">041D_01006\</span><span style="position:absolute;top:465.00px;font:400 11px/1 'Liberation Sans',sans-serif;color:#000;white-space:pre;letter-spacing:0.583px;left:749.80px;">custpack.img</span>
<div style="position:absolute;left:243px;top:503px;width:719px;height:1px;background:#d4d4d4"></div>
<div style="position:absolute;left:268px;top:481px;width:1px;height:22px;background:#cdcdcd"></div>
<div style="position:absolute;left:349px;top:481px;width:1px;height:22px;background:#cdcdcd"></div>
<div style="position:absolute;left:465px;top:481px;width:1px;height:22px;background:#cdcdcd"></div>
<div style="position:absolute;left:578px;top:481px;width:1px;height:22px;background:#cdcdcd"></div>
<div style="position:absolute;left:245px;top:486px;width:13px;height:13px;border:1px solid #8e8f8f;background:#f4f4f4"></div><div style="position:absolute;left:247px;top:488px;width:9px;height:9px;border:1px solid;border-color:#b2b4b8 #e6e8ea #e9ebed #b5b7bb;background:linear-gradient(135deg,#d2d5d9 0,#e6e8ea 45%,#f8f9f9 100%)"></div>
<span style="position:absolute;top:488.00px;font:400 11px/1 'Liberation Sans',sans-serif;color:#000;white-space:pre;letter-spacing:-0.088px;left:272.80px;">MOBILE_INFO</span>
<span style="position:absolute;top:488.00px;font:400 11px/1 'Liberation Sans',sans-serif;color:#000;white-space:pre;letter-spacing:-0.170px;left:353px;">0x000000002a880000</span>
<span style="position:absolute;top:488.00px;font:400 11px/1 'Liberation Sans',sans-serif;color:#000;white-space:pre;letter-spacing:-0.170px;left:468px;">0x0000000000000000</span>
<div style="position:absolute;left:243px;top:504px;width:719px;height:22px;background:#55a87f"></div>
<div style="position:absolute;left:243px;top:526px;width:719px;height:1px;background:#cfd8d3"></div>
<div style="position:absolute;left:268px;top:504px;width:1px;height:22px;background:#c4cfc9"></div>
<div style="position:absolute;left:349px;top:504px;width:1px;height:22px;background:#c4cfc9"></div>
<div style="position:absolute;left:465px;top:504px;width:1px;height:22px;background:#c4cfc9"></div>
<div style="position:absolute;left:578px;top:504px;width:1px;height:22px;background:#c4cfc9"></div>
<div style="position:absolute;left:245px;top:509px;width:13px;height:13px;border:1px solid #8e8f8f;background:#f4f4f4"></div><div style="position:absolute;left:247px;top:511px;width:9px;height:9px;border:1px solid;border-color:#b2b4b8 #e6e8ea #e9ebed #b5b7bb;background:linear-gradient(135deg,#d2d5d9 0,#e6e8ea 45%,#f8f9f9 100%)"></div><svg style="position:absolute;left:247px;top:511px" width="10" height="10"><path d="M1.8 5.1 L3.8 7.8 Q5.3 3.8 7.5 1" fill="none" stroke="#3a4e9c" stroke-width="1.65" stroke-linecap="round" stroke-linejoin="round"/></svg>
<span style="position:absolute;top:511.00px;font:400 11px/1 'Liberation Sans',sans-serif;color:#000;white-space:pre;letter-spacing:0.038px;left:272.80px;">ANDROID</span>
<span style="position:absolute;top:511.00px;font:400 11px/1 'Liberation Sans',sans-serif;color:#000;white-space:pre;letter-spacing:-0.170px;left:353px;">0x000000002ba80000</span>
<span style="position:absolute;top:511.00px;font:400 11px/1 'Liberation Sans',sans-serif;color:#000;white-space:pre;letter-spacing:0.077px;left:474px;">0x0000000051f7ffff</span>
<span style="position:absolute;top:511.00px;font:400 11px/1 'Liberation Sans',sans-serif;color:#000;white-space:pre;letter-spacing:0.700px;left:582.60px;">C:\Android\</span><span style="position:absolute;top:511.00px;font:400 11px/1 'Liberation Sans',sans-serif;color:#000;white-space:pre;letter-spacing:-0.118px;left:646.40px;">AIOT_7</span><span style="position:absolute;top:511.00px;font:400 11px/1 'Liberation Sans',sans-serif;color:#000;white-space:pre;letter-spacing:-0.006px;left:683.60px;">041D_01006\</span><span style="position:absolute;top:511.00px;font:400 11px/1 'Liberation Sans',sans-serif;color:#000;white-space:pre;letter-spacing:0.447px;left:749.80px;">system.img</span>
<div style="position:absolute;left:243px;top:549px;width:719px;height:1px;background:#d4d4d4"></div>
<div style="position:absolute;left:268px;top:527px;width:1px;height:22px;background:#cdcdcd"></div>
<div style="position:absolute;left:349px;top:527px;width:1px;height:22px;background:#cdcdcd"></div>
<div style="position:absolute;left:465px;top:527px;width:1px;height:22px;background:#cdcdcd"></div>
<div style="position:absolute;left:578px;top:527px;width:1px;height:22px;background:#cdcdcd"></div>
<div style="position:absolute;left:245px;top:532px;width:13px;height:13px;border:1px solid #8e8f8f;background:#f4f4f4"></div><div style="position:absolute;left:247px;top:534px;width:9px;height:9px;border:1px solid;border-color:#b2b4b8 #e6e8ea #e9ebed #b5b7bb;background:linear-gradient(135deg,#d2d5d9 0,#e6e8ea 45%,#f8f9f9 100%)"></div>
<span style="position:absolute;top:534.00px;font:400 11px/1 'Liberation Sans',sans-serif;color:#000;white-space:pre;letter-spacing:-0.403px;left:272.80px;">CACHE</span>
<span style="position:absolute;top:534.00px;font:400 11px/1 'Liberation Sans',sans-serif;color:#000;white-space:pre;letter-spacing:-0.170px;left:355px;">0x0000000051f80000</span>
<span style="position:absolute;top:534.00px;font:400 11px/1 'Liberation Sans',sans-serif;color:#000;white-space:pre;letter-spacing:-0.170px;left:468px;">0x0000000000000000</span>
<div style="position:absolute;left:243px;top:550px;width:719px;height:22px;background:#55a87f"></div>
<div style="position:absolute;left:243px;top:572px;width:719px;height:1px;background:#cfd8d3"></div>
<div style="position:absolute;left:268px;top:550px;width:1px;height:22px;background:#c4cfc9"></div>
<div style="position:absolute;left:349px;top:550px;width:1px;height:22px;background:#c4cfc9"></div>
<div style="position:absolute;left:465px;top:550px;width:1px;height:22px;background:#c4cfc9"></div>
<div style="position:absolute;left:578px;top:550px;width:1px;height:22px;background:#c4cfc9"></div>
<div style="position:absolute;left:245px;top:555px;width:13px;height:13px;border:1px solid #8e8f8f;background:#f4f4f4"></div><div style="position:absolute;left:247px;top:557px;width:9px;height:9px;border:1px solid;border-color:#b2b4b8 #e6e8ea #e9ebed #b5b7bb;background:linear-gradient(135deg,#d2d5d9 0,#e6e8ea 45%,#f8f9f9 100%)"></div>
<span style="position:absolute;top:557.00px;font:400 11px/1 'Liberation Sans',sans-serif;color:#000;white-space:pre;letter-spacing:-0.205px;left:272.80px;">USRDATA</span>
<span style="position:absolute;top:557.00px;font:400 11px/1 'Liberation Sans',sans-serif;color:#000;white-space:pre;letter-spacing:-0.170px;left:353px;">0x0000000065880000</span>
<span style="position:absolute;top:557.00px;font:400 11px/1 'Liberation Sans',sans-serif;color:#000;white-space:pre;letter-spacing:-0.170px;left:468px;">0x0000000000000000</span>
<div style="position:absolute;left:962px;top:245px;width:18px;height:328px;background:linear-gradient(to right,#e1e1e1,#ededed 30%,#f1f1f1)"></div>
<svg style="position:absolute;left:967px;top:251px" width="9" height="6"><path d="M0.6 4.8 L4.2 1 L7.8 4.8 Z" fill="#3f3f3f"/></svg>
<svg style="position:absolute;left:967px;top:560px" width="9" height="6"><path d="M0.6 1 L7.8 1 L4.2 4.8 Z" fill="#3f3f3f"/></svg>
<div style="position:absolute;left:964px;top:284px;width:15px;height:271px;border:1px solid #9a9a9a;border-radius:2px;background:linear-gradient(to right,#f6f6f6 0,#e6e6e6 50%,#cdcdcd 100%);box-shadow:inset 0 0 0 1px rgba(255,255,255,.75)"></div>
<div style="position:absolute;left:968px;top:415px;width:7px;height:1px;background:#707070"></div>
<div style="position:absolute;left:968px;top:417px;width:7px;height:1px;background:#707070"></div>
<div style="position:absolute;left:968px;top:419px;width:7px;height:1px;background:#707070"></div>
<div style="position:absolute;left:968px;top:421px;width:7px;height:1px;background:#707070"></div>
<div style="position:absolute;left:222px;top:601px;width:797px;height:19px;background:#fff;border-top:1px solid #a0a0a0;border-left:1px solid #a0a0a0"></div>
<div style="position:absolute;left:222px;top:620px;width:797px;height:1px;background:#a0a0a0"></div>
<div style="position:absolute;left:222px;top:634px;width:797px;height:1px;background:#fbfbfb"></div>
<div style="position:absolute;left:1018px;top:602px;width:1px;height:32px;background:#fbfbfb"></div>
<div style="position:absolute;left:222px;top:620px;width:1px;height:14px;background:#a0a0a0"></div>
<div style="position:absolute;left:322px;top:620px;width:1px;height:14px;background:#a0a0a0"></div>
<div style="position:absolute;left:422px;top:620px;width:1px;height:14px;background:#a0a0a0"></div>
<div style="position:absolute;left:482px;top:620px;width:1px;height:14px;background:#a0a0a0"></div>
<div style="position:absolute;left:532px;top:620px;width:1px;height:14px;background:#a0a0a0"></div>
<div style="position:absolute;left:631px;top:620px;width:1px;height:14px;background:#a0a0a0"></div>
<div style="position:absolute;left:722px;top:620px;width:1px;height:14px;background:#a0a0a0"></div>
<span style="position:absolute;top:623.00px;font:400 11px/1 'Liberation Sans',sans-serif;color:#000;white-space:pre;letter-spacing:-0.336px;left:294px;">0 B/s</span>
<span style="position:absolute;top:623.00px;font:400 11px/1 'Liberation Sans',sans-serif;color:#000;white-space:pre;letter-spacing:-0.141px;left:382px;">0 Bytes</span>
<span style="position:absolute;top:623.00px;font:700 11px/1 'Liberation Sans',sans-serif;color:#000;white-space:pre;letter-spacing:-0.152px;left:490px;">EMMC</span>
<span style="position:absolute;top:623.00px;font:400 11px/1 'Liberation Sans',sans-serif;color:#000;white-space:pre;letter-spacing:-0.350px;left:554px;">High Speed</span>
<span style="position:absolute;top:623.00px;font:400 11px/1 'Liberation Sans',sans-serif;color:#000;white-space:pre;letter-spacing:0.195px;left:666px;">0:00</span>
<span style="position:absolute;top:623.00px;font:400 11px/1 'Liberation Sans',sans-serif;color:#000;white-space:pre;letter-spacing:-0.123px;left:725.90px;">USB: DA Download All(high speed,auto detect)</span>
<div style="position:absolute;left:341.7px;top:245.4px;width:340.90000000000003px;height:167.49999999999997px;border-radius:8px;box-shadow:0 0 0 1px rgba(0,0,0,.55),0 1px 7px 3px rgba(0,0,0,.62),0 2px 20px 7px rgba(0,0,0,.30)"></div>
<div style="position:absolute;left:340.7px;top:243.4px;width:342.90000000000003px;height:168.49999999999997px;border-radius:7px;border:1px solid #161c22;overflow:hidden;background:#c6d7ee"><div style="position:absolute;left:0;top:29px;width:100%;height:140px;background:repeating-linear-gradient(to bottom,#93c9b0 0,#93c9b0 19px,#eef7f5 23px,#eef7f5 42px,#93c9b0 46px);filter:blur(1.5px)"></div><div style="position:absolute;left:0;top:0;width:100%;height:30px;background:linear-gradient(to bottom,#b9cdea 0,#c2d4ee 50%,#cbdbf1 100%)"></div><div style="position:absolute;left:156px;top:8px;width:60px;height:11px;background:#6f7c9c;opacity:.6;filter:blur(3.5px);border-radius:6px"></div><div style="position:absolute;left:0;top:0;width:100%;height:100%;border-radius:6px;border:1px solid rgba(255,255,255,.85);box-shadow:inset 0 0 3px 1px rgba(255,255,255,.55)"></div></div>
<div style="position:absolute;left:346.9px;top:271.9px;width:330.70000000000005px;height:133.90000000000003px;background:#f0f0f0;border:1px solid #6c757c;box-shadow:inset 0 0 0 1px #fcfdfe,0 0 0 1px rgba(255,255,255,.55)"></div>
<svg style="position:absolute;left:351px;top:251.5px" width="10.4" height="13.4" viewBox="0 0 10.4 13.4"><rect x="0.4" y="0.6" width="9.6" height="12.2" rx="0.8" fill="#3b3b3b"/><rect x="1" y="0.8" width="8.4" height="10" fill="#82d000"/><rect x="1" y="0.8" width="8.4" height="2.4" fill="#fbfff2"/><path d="M1 2.6 L5.2 6 L9.4 2.6 V4.6 L5.2 7.2 L1 4.6 Z" fill="#a7e24a"/><rect x="1" y="7.6" width="8.4" height="0.9" fill="#d9f5a8"/><rect x="1" y="8.5" width="8.4" height="2.3" fill="#7ccb00"/></svg>
<div style="position:absolute;left:362px;top:248px;width:140px;height:20px;background:radial-gradient(ellipse at center,rgba(255,255,255,.55),rgba(255,255,255,0) 72%)"></div>
<span style="position:absolute;top:252.00px;font:400 12px/1 'Liberation Sans',sans-serif;color:#000;white-space:pre;letter-spacing:-0.144px;left:369.30px;">Smart Phone Flash Tool</span>
<svg style="position:absolute;left:628px;top:242px" width="52" height="23" viewBox="628 242 52 23"><defs><linearGradient id="cr" x1="0" y1="0" x2="0" y2="1"><stop offset="0" stop-color="#e4c6c9"/><stop offset=".46" stop-color="#dbaaae"/><stop offset=".5" stop-color="#c97679"/><stop offset=".8" stop-color="#cf908f"/><stop offset="1" stop-color="#d6a6a1"/></linearGradient></defs><path d="M629.4 244.4 H678 V259 Q678 263.8 673.4 263.8 H634 Q629.4 263.8 629.4 259 Z" fill="none" stroke="rgba(255,255,255,.7)" stroke-width="1"/><path d="M630.4 244.4 H677 V258.8 Q677 262.8 673 262.8 H634.4 Q630.4 262.8 630.4 258.8 Z" fill="url(#cr)" stroke="#5d2f31" stroke-width="1"/><path d="M631.4 244.9 H676 V258.6 Q676 261.8 672.8 261.8 H634.6 Q631.4 261.8 631.4 258.6 Z" fill="none" stroke="rgba(255,255,255,.35)" stroke-width="1"/><path d="M650.6 249 L658.4 256.4 M658.4 249 L650.6 256.4" stroke="#b98486" stroke-width="4" stroke-linecap="butt"/><path d="M650.6 249 L658.4 256.4 M658.4 249 L650.6 256.4" stroke="#f1dcde" stroke-width="2.5" stroke-linecap="butt"/></svg>
<svg style="position:absolute;left:357px;top:285px" width="35" height="31" viewBox="357 285 35 31"><defs><linearGradient id="wy" x1="0.3" y1="0" x2="0.7" y2="1"><stop offset="0" stop-color="#fff200"/><stop offset=".5" stop-color="#fbd000"/><stop offset="1" stop-color="#e6a200"/></linearGradient><linearGradient id="wb" x1="0" y1="0" x2="0" y2="1"><stop offset="0" stop-color="#4a4a5c"/><stop offset="1" stop-color="#0c0c10"/></linearGradient></defs><path d="M374.4 287.6 Q375.7 287.6 376.4 288.9 L389.3 311 Q390.4 313.6 387.6 314 H361.2 Q358.4 313.6 359.5 311 L372.4 288.9 Q373.1 287.6 374.4 287.6 Z" fill="#e2e2e6" stroke="#a3a3a8" stroke-width="1"/><path d="M360.5 313.4 H388.3" stroke="#8f8f94" stroke-width="1.1"/><path d="M374.4 290.4 L387.2 311.9 H361.6 Z" fill="url(#wy)" stroke="#dca000" stroke-width=".7" stroke-linejoin="round"/><path d="M372.5 295.4 H376.3 L375.7 306 H373.1 Z" fill="url(#wb)"/><ellipse cx="374.4" cy="309" rx="2" ry="1.8" fill="#15151c"/></svg>
<span style="position:absolute;top:287.00px;font:400 11.5px/1 'Liberation Sans',sans-serif;color:#000;white-space:pre;letter-spacing:-0.490px;left:411.40px;">BROM ERROR : S_COM_PORT_OPEN_FAIL (1013)</span>
<span style="position:absolute;top:317.00px;font:400 11.5px/1 'Liberation Sans',sans-serif;color:#000;white-space:pre;letter-spacing:0.198px;left:408.80px;">[COM] Failed to open COM port.</span>
<span style="position:absolute;top:332.00px;font:400 11.5px/1 'Liberation Sans',sans-serif;color:#000;white-space:pre;letter-spacing:0.297px;left:408.80px;">[HINT]:</span>
<div style="position:absolute;left:435px;top:372.4px;width:73px;height:21px;border:1px solid #3c7fb1;border-radius:3px;background:linear-gradient(to bottom,#f2f2f2 0,#ebebeb 48%,#dddddd 52%,#cfcfcf 100%);box-shadow:inset 0 0 0 1px #48d8fb"></div>
<div style="position:absolute;left:515.6px;top:372.4px;width:73.7px;height:21px;border:1px solid #707070;border-radius:3px;background:linear-gradient(to bottom,#f2f2f2 0,#ebebeb 48%,#dddddd 52%,#cfcfcf 100%);box-shadow:inset 0 0 0 1px rgba(255,255,255,.85)"></div>
<span style="position:absolute;top:378.00px;font:400 11.5px/1 'Liberation Sans',sans-serif;color:#000;white-space:pre;letter-spacing:-0.062px;left:463px;text-decoration:none">OK</span>
<div style="position:absolute;left:463.2px;top:388.6px;width:8.2px;height:1px;background:#000"></div>
<span style="position:absolute;top:378.00px;font:400 11.5px/1 'Liberation Sans',sans-serif;color:#000;white-space:pre;letter-spacing:0.211px;left:540px;">Help</span>
<svg style="position:absolute;left:0px;top:55px" width="12" height="26" viewBox="0 55 12 26"><path d="M-1 60.2 L-1 76.4 L2.9 72.8 L5.6 78.7 L8 77.6 L5.4 71.8 L10.2 71.8 Z" fill="#fff" stroke="#0c0c18" stroke-width="1.1" stroke-linejoin="miter"/></svg>
</body></html>
